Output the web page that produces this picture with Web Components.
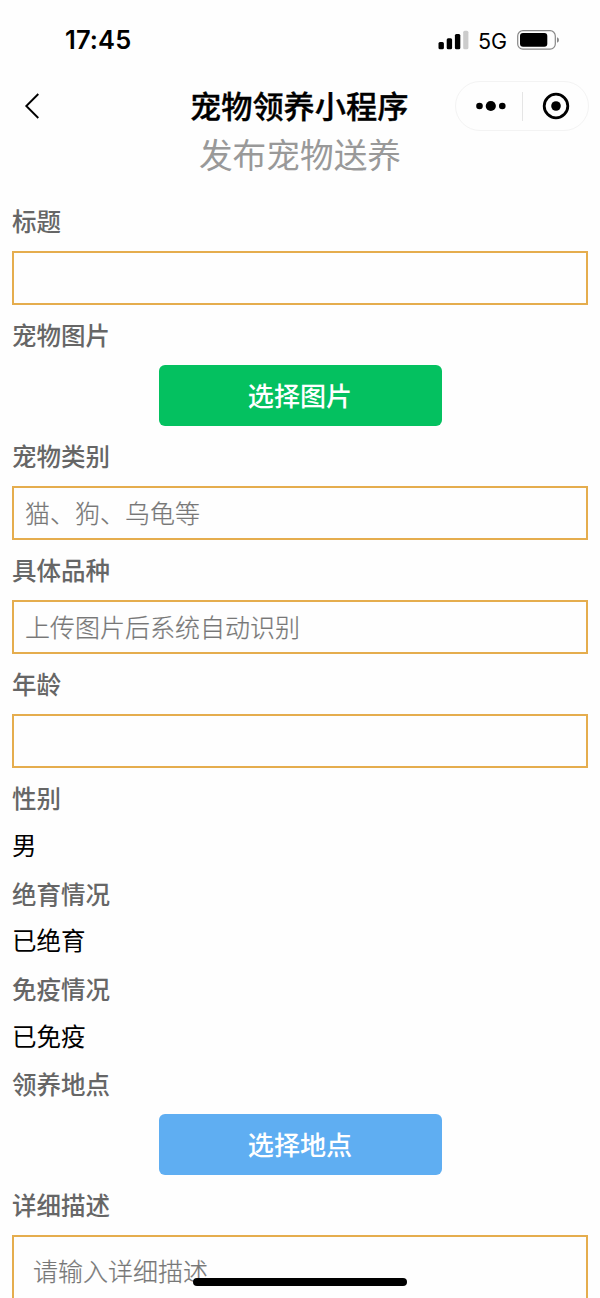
<!DOCTYPE html>
<html lang="zh-CN">
<head>
<meta charset="utf-8">
<title>宠物领养小程序</title>
<style>
html,body{margin:0;height:100%;overflow:hidden;background:#fefefe}
body{font-family:"Noto Sans CJK SC",sans-serif;color:#000}
</style>
</head>
<body>
<pet-app>
  <status-bar slot="top"></status-bar>
  <nav-bar slot="top">宠物领养小程序</nav-bar>
  <page-title>发布宠物送养</page-title>
  <form-label>标题</form-label>
  <text-field></text-field>
  <form-label>宠物图片</form-label>
  <action-button>选择图片</action-button>
  <form-label>宠物类别</form-label>
  <text-field>猫、狗、乌龟等</text-field>
  <form-label>具体品种</form-label>
  <text-field>上传图片后系统自动识别</text-field>
  <form-label>年龄</form-label>
  <text-field></text-field>
  <form-label>性别</form-label>
  <picker-value>男</picker-value>
  <form-label>绝育情况</form-label>
  <picker-value>已绝育</picker-value>
  <form-label>免疫情况</form-label>
  <picker-value>已免疫</picker-value>
  <form-label>领养地点</form-label>
  <action-button style="--fill:#5faef2">选择地点</action-button>
  <form-label>详细描述</form-label>
  <text-field multiline>请输入详细描述</text-field>
</pet-app>
<script>
const define = (name, html) => customElements.define(name, class extends HTMLElement {
  constructor() {
    super();
    this.attachShadow({mode: 'open'}).innerHTML = html;
  }
});

define('pet-app', `<style>
:host{display:flex;flex-direction:column;position:relative;height:1298px;width:600px;overflow:hidden}
main{display:flex;flex-direction:column;gap:12px;padding:0 12px}
.home{position:absolute;left:193px;top:1278px;width:214px;height:8px;border-radius:4px;background:#000}
</style><slot name="top"></slot><main><slot></slot></main><div class="home"></div>`);

define('status-bar', `<style>
:host{display:flex;flex:none;height:80px;align-items:center;justify-content:space-between;padding:0 40px 0 65px;box-sizing:border-box}
time{font:600 25.5px/30px Inter,sans-serif;letter-spacing:.1px}
.right{display:flex;align-items:center}
.net{font:400 21.5px/30px Inter,sans-serif;margin:2px 0 0 9px;width:39px}
svg{display:block}
</style>
<time>17:45</time>
<div class="right">
<svg width="31" height="20" viewBox="0 0 31 20"><rect x="0.5" y="12" width="5.4" height="7.2" rx="1.5"/><rect x="8.7" y="8.3" width="5.4" height="10.9" rx="1.5"/><rect x="16.9" y="4" width="5.4" height="15.2" rx="1.5"/><rect x="25.2" y=".8" width="5.2" height="18.4" rx="1.5" fill="#ccc"/></svg>
<span class="net">5G</span>
<svg width="43" height="20" viewBox="0 0 43 20"><rect x=".7" y=".7" width="37.6" height="18.4" rx="5.2" fill="none" stroke="#888" stroke-width="1.2"/><rect x="3" y="3" width="27.3" height="13.8" rx="3"/><path d="M40 7.2v5.6q2-.8 2-2.8t-2-2.8" fill="#888"/></svg>
</div>`);

define('nav-bar', `<style>
:host{display:grid;flex:none;grid-template-columns:190px 1fr 145px;height:52px;align-items:center}
h1{margin:0;padding-bottom:2px;font-size:31.2px;line-height:44px;font-weight:500;white-space:nowrap;-webkit-text-stroke:.35px #000}
.back{display:block;margin-left:24px}
.capsule{display:grid;grid-template-columns:66px 1px 1fr;align-items:center;width:134px;height:50px;box-sizing:border-box;border:1px solid #f3f3f3;border-radius:25px}
.capsule i{height:29px;background:#e5e5e5}
svg{display:block}
.dots{margin-left:20px}.target{margin-left:19px}
</style>
<svg class="back" width="18" height="28" viewBox="0 0 18 28" fill="none" stroke="#000" stroke-width="1.9"><path d="M14.3 2 2.3 14l12 12"/></svg>
<h1><slot></slot></h1>
<div class="capsule">
<svg class="dots" width="30" height="12" viewBox="0 0 30 12"><circle cx="3.5" cy="6" r="3.3"/><circle cx="14.8" cy="6" r="5.1"/><circle cx="26.3" cy="6" r="3.3"/></svg>
<i></i>
<svg class="target" width="28" height="28" viewBox="0 0 28 28"><circle cx="14" cy="14" r="11.8" fill="none" stroke="#000" stroke-width="2.8"/><circle cx="14" cy="14" r="4.8"/></svg>
</div>`);

define('page-title', `<style>
:host{display:block;height:47px;margin-bottom:12px;line-height:44px;font-size:33.7px;color:#999;text-align:center;font-weight:400}
</style><slot></slot>`);

define('form-label', `<style>
:host{display:block;height:35.7px;line-height:35px;font-size:24.5px;font-weight:500;color:#666}
</style><slot></slot>`);

define('picker-value', `<style>
:host{display:block;height:35.7px;line-height:34.6px;font-size:24.5px;color:#000}
</style><slot></slot>`);

define('text-field', `<style>
:host{display:block;box-sizing:border-box;height:54.3px;border:2px solid #e5ad4e;padding-left:11px;font-size:25px;line-height:49px;color:#777;font-weight:300;-webkit-text-stroke:.2px #777;white-space:nowrap}
:host([multiline]){height:120px;padding:9px 0 0 19px}
</style><slot></slot>`);

define('action-button', `<style>
:host{display:block;align-self:center;width:283px;height:61.5px;border-radius:6px;background:var(--fill,#04c160);color:#fff;font-size:26.1px;line-height:61px;font-weight:500;text-align:center}
</style><slot></slot>`);
</script>
</body>
</html>
